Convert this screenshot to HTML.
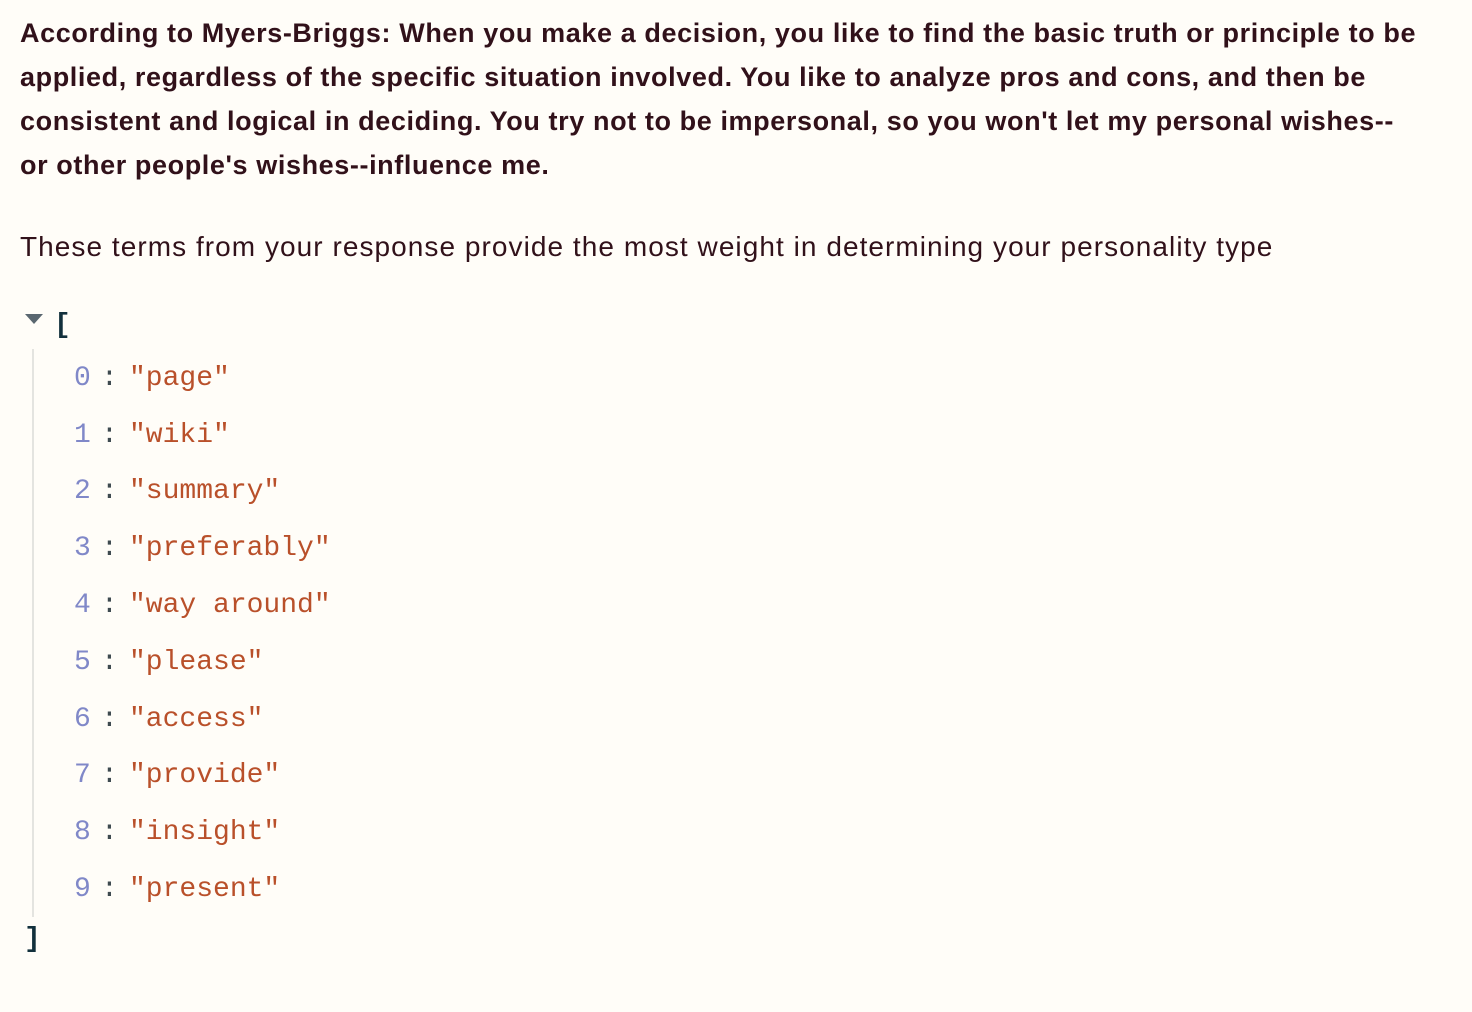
<!DOCTYPE html>
<html><head><style>
body{margin:0;background:#fffdf8;width:1472px;height:1012px;overflow:hidden;color:#31111a;font-family:"Liberation Sans",sans-serif}
.p1{position:absolute;left:20px;top:11px;width:1460px;white-space:nowrap;font-weight:bold;font-size:27px;line-height:44px;letter-spacing:0.6px}
.p2{position:absolute;left:20px;top:225px;white-space:nowrap;font-size:28px;line-height:44px;letter-spacing:1.05px}
.mono{font-family:"Liberation Mono",monospace;font-size:28px}
.tri{position:absolute;left:25px;top:314px;width:0;height:0;border-left:9px solid transparent;border-right:9px solid transparent;border-top:10px solid #5a6770}
.br{position:absolute;color:#12303c;font-weight:bold}
.line{position:absolute;left:32px;top:349px;width:2px;height:568px;background:#e4e4e0}
.row{position:absolute;left:0;height:40px;line-height:40px;white-space:pre}
.row span{position:absolute;top:0}
.k{color:#8088c8;left:74px}.c{color:#3e4a50;left:101px}.s{color:#b9502a;left:129px}
</style></head><body>
<div class="p1">According to Myers-Briggs: When you make a decision, you like to find the basic truth or principle to be<br>applied, regardless of the specific situation involved. You like to analyze pros and cons, and then be<br>consistent and logical in deciding. You try not to be impersonal, so you won't let my personal wishes--<br>or other people's wishes--influence me.</div>
<div class="p2">These terms from your response provide the most weight in determining your personality type</div>
<div class="tri"></div>
<div class="br mono" style="left:54px;top:310px">[</div>
<div class="line"></div>
<div class="mono">
<div class="row" style="top:359px"><span class="k">0</span><span class="c">:</span><span class="s">"page"</span></div>
<div class="row" style="top:416px"><span class="k">1</span><span class="c">:</span><span class="s">"wiki"</span></div>
<div class="row" style="top:472px"><span class="k">2</span><span class="c">:</span><span class="s">"summary"</span></div>
<div class="row" style="top:529px"><span class="k">3</span><span class="c">:</span><span class="s">"preferably"</span></div>
<div class="row" style="top:586px"><span class="k">4</span><span class="c">:</span><span class="s">"way around"</span></div>
<div class="row" style="top:643px"><span class="k">5</span><span class="c">:</span><span class="s">"please"</span></div>
<div class="row" style="top:700px"><span class="k">6</span><span class="c">:</span><span class="s">"access"</span></div>
<div class="row" style="top:756px"><span class="k">7</span><span class="c">:</span><span class="s">"provide"</span></div>
<div class="row" style="top:813px"><span class="k">8</span><span class="c">:</span><span class="s">"insight"</span></div>
<div class="row" style="top:870px"><span class="k">9</span><span class="c">:</span><span class="s">"present"</span></div>
</div>
<div class="br mono" style="left:24px;top:924px">]</div>
</body></html>
